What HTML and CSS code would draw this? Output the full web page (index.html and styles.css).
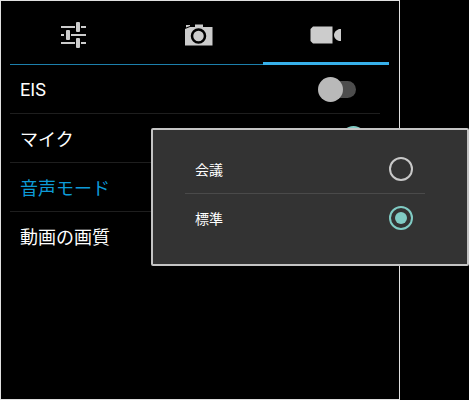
FILE: index.html
```
<!DOCTYPE html>
<html lang="ja">
<head>
<meta charset="utf-8">
<title>動画設定</title>
<link rel="stylesheet" href="styles.css">
</head>
<body>
<main class="panel">
  <nav class="tabs">
    <button class="tab" aria-label="一般">
      <svg width="26" height="26" viewBox="0 0 26 26" fill="#ccc"><path d="M1 4h14v2H1zM21 4h5v2h-5zM1 12h3v2H1zM11 12h15v2H11zM1 20h14v2H1zM21 20h5v2h-5z"/><rect x="16" y="0" width="4" height="10" rx="1"/><rect x="6" y="8" width="4" height="10" rx="1"/><rect x="16" y="16" width="4" height="10" rx="1"/></svg>
    </button>
    <button class="tab" aria-label="カメラ">
      <svg width="28" height="22" viewBox="0 0 28 22"><path fill="#ccc" d="M0 5l5-2h5V.5h8V3h9.500v18.500H0z"/><path fill="#ccc" d="M1 1h4v1L1 3.500z"/><circle cx="13.500" cy="12" r="6.500" fill="#ccc" stroke="#000" stroke-width="2.500"/></svg>
    </button>
    <button class="tab tab-active" aria-label="動画">
      <svg width="32" height="18" viewBox="0 0 32 18" fill="#ccc"><path d="M3 .5h19.500v17H3L.5 15V3zM31 3v12h-2q-5-2-5-6t5-6z"/></svg>
    </button>
  </nav>
  <div class="settings">
    <label class="row"><span>EIS</span><input class="switch" type="checkbox"></label>
    <label class="row"><span>マイク</span><input class="switch" type="checkbox" checked></label>
    <button class="row row-current">音声モード</button>
    <button class="row">動画の画質</button>
  </div>
</main>
<div class="popup" role="radiogroup" aria-label="音声モード">
  <label class="option"><span>会議</span><input class="radio" type="radio" name="audio"></label>
  <label class="option"><span>標準</span><input class="radio" type="radio" name="audio" checked></label>
</div>
</body>
</html>
```
FILE: styles.css
```
* { box-sizing: border-box; }
body {
  margin: 0;
  min-height: 100vh;
  display: flex;
  background: #000;
  color: #fff;
  font-family: Roboto, "Noto Sans CJK JP", sans-serif;
}
button {
  margin: 0;
  border: 0;
  background: none;
  color: inherit;
  font: inherit;
  text-align: left;
}
.panel {
  flex: 1;
  margin-right: 69px;
  padding: 0 10px 0 9px;
  border: 1px solid #e0e0e0;
}
.tabs {
  display: grid;
  grid-template-columns: repeat(3, 1fr);
  height: 64px;
  border-bottom: 1px solid #1c7fac;
}
.tab {
  display: flex;
  align-items: center;
  justify-content: center;
  padding: 4px 0 0;
  height: 64px;
}
.tab-active { border-bottom: 3px solid #37b0ea; padding-top: 6px; }
.settings { margin-right: 9px; }
.row {
  display: flex;
  align-items: center;
  justify-content: space-between;
  width: 100%;
  height: 49px;
  padding: 0 10px;
  border-bottom: 1px solid #1e1e1e;
  font-size: 18px;
}
.row:last-child { border-color: transparent; }
.row-current { color: #0d9bd8; }
.switch {
  appearance: none;
  display: flex;
  align-items: center;
  width: 38px;
  height: 17px;
  margin: 0 14px 0 0;
  border-radius: 9px;
  background: linear-gradient(#4d4d4d, #4d4d4d) right / 26px no-repeat;
}
.switch::before {
  content: "";
  width: 25px;
  height: 25px;
  flex: none;
  border-radius: 50%;
  background: #b9b9b9;
}
.switch:checked { justify-content: flex-end; }
.switch:checked::before { margin-right: -10px; background: #80cbc4; }
.popup {
  position: absolute;
  top: 128px;
  left: 151px;
  right: 0;
  padding: 14px 42px 22px 32px;
  border: 2px solid #c4c4c4;
  border-radius: 2px;
  background: #333;
}
.option {
  display: flex;
  align-items: center;
  justify-content: space-between;
  height: 49px;
  padding: 0 10px;
  font-size: 14px;
}
.option + .option { border-top: 1px solid #4a4a4a; }
.radio {
  appearance: none;
  display: grid;
  place-items: center;
  width: 24px;
  height: 24px;
  margin: 0 2px 0 0;
  border: 2px solid #c8c8c8;
  border-radius: 50%;
}
.radio:checked { border-color: #80cbc4; }
.radio:checked::before {
  content: "";
  width: 12px;
  height: 12px;
  border-radius: 50%;
  background: #80cbc4;
}
```
